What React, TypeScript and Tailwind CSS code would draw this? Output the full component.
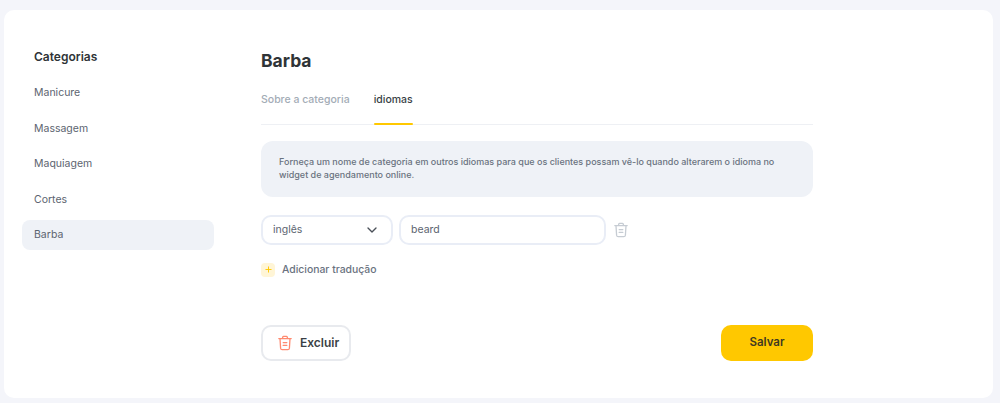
import React from 'react';
import { ChevronDown, Plus } from 'lucide-react';

const categories = ['Manicure', 'Massagem', 'Maquiagem', 'Cortes', 'Barba'];

const TrashIcon: React.FC<{ className?: string }> = ({ className }) => (
  <svg viewBox="0 0 16 16" fill="none" stroke="currentColor" strokeWidth="1.3" strokeLinecap="round" strokeLinejoin="round" className={className}>
    <path d="M1.8 3.6h12.4" />
    <path d="M5.4 3.4l.5-1.6c.1-.3.3-.5.7-.5h2.8c.4 0 .6.2.7.5l.5 1.6" />
    <path d="M3 3.8l.6 9.4c.1.9.7 1.5 1.6 1.5h5.6c.9 0 1.5-.6 1.6-1.5l.6-9.4" />
    <path d="M6.2 7.6h3.6M6.2 10.4h3.6" />
  </svg>
);

export default function App() {
  return (
    <div className="h-[403px] w-[1000px] overflow-hidden bg-[#f4f5fa] pb-[5px] pl-[4px] pr-[7px] pt-[10px] font-['Inter',sans-serif]">
      <div className="flex h-full rounded-[10px] bg-white">
        <aside className="ml-[18px] w-[192px] pt-[38px]">
          <h2 className="mb-[12px] pl-[12px] text-[12px] font-semibold leading-[18px] text-[#2f3437]">Categorias</h2>
          <ul className="flex flex-col gap-[5.5px]">
            {categories.map((name) => (
              <li
                key={name}
                className={`flex h-[30px] items-center rounded-lg pl-[12px] text-[10.5px] text-[#5c6470] ${name === 'Barba' ? 'bg-[#eff2f7]' : ''}`}
              >
                {name}
              </li>
            ))}
          </ul>
        </aside>

        <main className="ml-[47px] flex w-[552px] flex-col pt-[38px]">
          <h1 className="text-[17.5px] font-bold leading-[26px] text-[#2f3437]">Barba</h1>

          <div className="mt-[13px] flex h-[38px] gap-[24px] border-b border-[#eef0f4] text-[10.5px]">
            <span className="pt-[5px] font-medium text-[#a3acb6]">Sobre a categoria</span>
            <span className="relative h-[38px] pt-[5px] font-medium text-[#3a3f45]">
              idiomas
              <span className="absolute bottom-0 left-0 right-0 h-[2px] rounded-full bg-[#ffc800]" />
            </span>
          </div>

          <div className="mt-[16px] h-[56px] rounded-xl bg-[#eff2f7] px-[18px] py-[14px] text-[9px] font-medium leading-[13px] text-[#6a7280]">
            Forneça um nome de categoria em outros idiomas para que os clientes possam vê-lo quando alterarem o idioma no widget de agendamento online.
          </div>

          <div className="mt-[18px] flex items-center">
            <div className="flex h-[30px] w-[132px] items-center justify-between rounded-[10px] border-2 border-[#e9edf6] pl-[10px] pr-[11px] text-[10.5px] text-[#5c6470]">
              inglês
              <ChevronDown className="h-[16px] w-[16px] text-[#4a5058]" strokeWidth={2} />
            </div>
            <div className="ml-[6px] flex h-[30px] w-[207px] items-center rounded-[10px] border-2 border-[#e9edf6] pl-[10px] text-[10.5px] text-[#5c6470]">
              beard
            </div>
            <TrashIcon className="ml-[7px] h-[16px] w-[16px] text-[#c6ccd3]" />
          </div>

          <div className="mt-[17px] flex items-center gap-[7px]">
            <span className="flex h-[14px] w-[14px] items-center justify-center rounded-[4px] bg-[#fff5d6]">
              <Plus className="h-[9px] w-[9px] text-[#ffc800]" strokeWidth={2.5} />
            </span>
            <span className="text-[10.4px] font-medium text-[#6a7280]">Adicionar tradução</span>
          </div>

          <div className="mt-[47px] flex justify-between">
            <button className="flex h-[36px] w-[90px] items-center gap-[7px] rounded-[10px] border-2 border-[#e8eaee] bg-white pl-[14px] text-[12px] font-semibold text-[#3a3f45]">
              <TrashIcon className="h-[16px] w-[16px] text-[#ff8a70]" />
              Excluir
            </button>
            <button className="h-[36px] w-[92px] rounded-[10px] bg-[#ffc800] text-[11.5px] font-semibold text-[#3f3a22]">
              Salvar
            </button>
          </div>
        </main>
      </div>
    </div>
  );
}
